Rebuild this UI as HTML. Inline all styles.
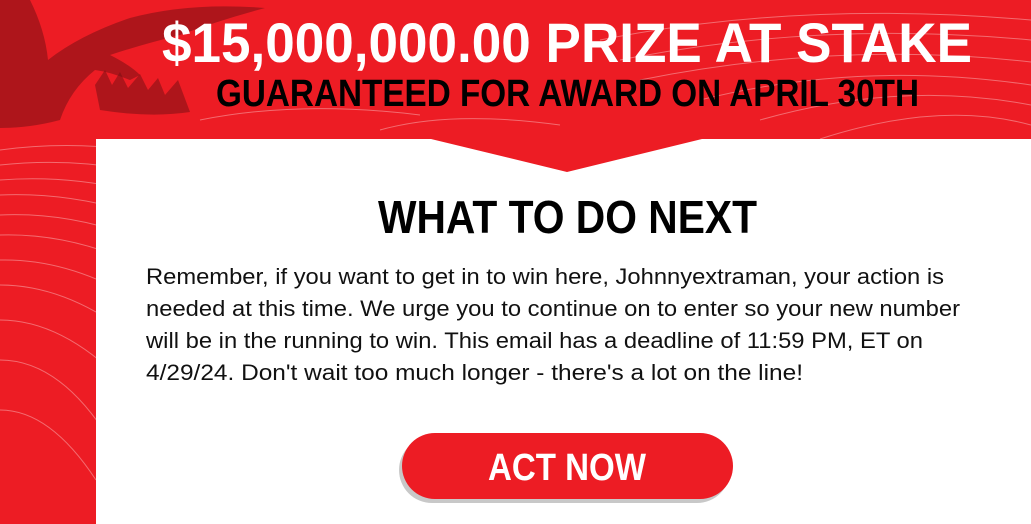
<!DOCTYPE html>
<html><head><meta charset="utf-8"><style>
html,body{margin:0;padding:0;width:1031px;height:524px;overflow:hidden;background:#ed1c24}
svg{display:block}
</style></head><body>
<svg width="1031" height="524" viewBox="0 0 1031 524" xmlns="http://www.w3.org/2000/svg" font-family="Liberation Sans, Arial, sans-serif">
<rect width="1031" height="524" fill="#ed1c24"/>
<g fill="none" stroke="#fff" stroke-opacity="0.35" stroke-width="1">
<path d="M0 150 Q150 130 300 200"/><path d="M0 165 Q140 150 280 220"/><path d="M0 180 Q130 170 260 240"/>
<path d="M0 195 Q120 190 240 260"/><path d="M0 215 Q110 210 220 280"/><path d="M0 235 Q100 232 200 300"/>
<path d="M0 260 Q90 258 180 330"/><path d="M0 285 Q80 285 160 360"/><path d="M0 320 Q70 320 140 400"/>
<path d="M0 360 Q60 360 110 440"/><path d="M0 410 Q50 410 96 480"/>
<path d="M600 40 Q800 0 1031 20"/><path d="M620 60 Q820 20 1031 40"/><path d="M640 80 Q840 40 1031 62"/>
<path d="M700 100 Q860 60 1031 85"/><path d="M760 120 Q900 80 1031 105"/><path d="M820 139 Q940 100 1031 125"/>
<path d="M380 130 Q450 110 560 125"/><path d="M200 120 Q300 100 420 115"/>
</g>
<g fill="#7a1014" fill-opacity="0.55">
<path d="M0 0 L30 0 Q45 30 48 60 Q80 35 130 18 Q190 2 265 8 Q220 20 180 35 Q140 45 110 55 Q130 65 140 75 L130 80 Q110 72 95 70 Q70 90 60 120 Q30 128 0 128 Z"/>
<path d="M95 85 L105 70 L112 85 L120 72 L128 88 L140 74 L148 90 L158 78 L165 95 L178 80 L190 112 Q150 118 100 110 Z"/>
</g>
<polygon points="96,139 431,139 567,172 702,139 1031,139 1031,524 96,524" fill="#fff"/>
<text x="162" y="62" font-size="56" font-weight="bold" fill="#fff" textLength="810" lengthAdjust="spacingAndGlyphs">$15,000,000.00 PRIZE AT STAKE</text>
<text x="216" y="106" font-size="38" font-weight="bold" fill="#000" textLength="703" lengthAdjust="spacingAndGlyphs">GUARANTEED FOR AWARD ON APRIL 30TH</text>
<text x="378" y="233" font-size="46" font-weight="bold" fill="#000" textLength="379" lengthAdjust="spacingAndGlyphs">WHAT TO DO NEXT</text>
<g font-size="22" fill="#111">
<text x="146" y="284" textLength="798" lengthAdjust="spacingAndGlyphs">Remember, if you want to get in to win here, Johnnyextraman, your action is</text>
<text x="146" y="316" textLength="814" lengthAdjust="spacingAndGlyphs">needed at this time. We urge you to continue on to enter so your new number</text>
<text x="146" y="348" textLength="777" lengthAdjust="spacingAndGlyphs">will be in the running to win. This email has a deadline of 11:59 PM, ET on</text>
<text x="146" y="380" textLength="657" lengthAdjust="spacingAndGlyphs">4/29/24. Don't wait too much longer - there's a lot on the line!</text>
</g>
<rect x="399" y="437" width="331" height="66" rx="33" fill="#c8c8c8"/>
<rect x="402" y="433" width="331" height="66" rx="33" fill="#ed1c24"/>
<text x="488" y="480" font-size="38" font-weight="bold" fill="#fff" textLength="158" lengthAdjust="spacingAndGlyphs">ACT NOW</text>
</svg>
</body></html>
